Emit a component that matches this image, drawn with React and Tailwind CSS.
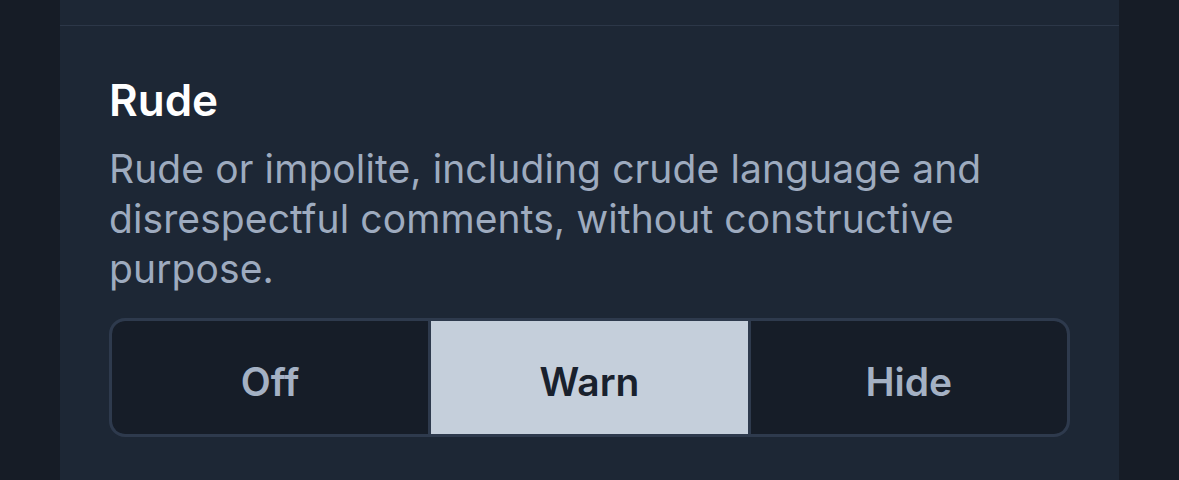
export default function App() {
  const font = { fontFamily: "Inter, 'Noto Sans', sans-serif" };
  return (
    <div className="w-[1179px] h-[480px] bg-[#161c26] flex justify-center overflow-hidden" style={font}>
      <div className="w-[1059px] h-full bg-[#1d2735] flex flex-col">
        <div className="h-[26px] border-b border-[#2c3748] shrink-0" />
        <div className="px-[49px] pt-[48px] flex flex-col">
          <div className="text-[44px] leading-[53px] font-semibold text-white">Rude</div>
          <div className="mt-[17px] text-[39px] leading-[50px] text-[#9eabbf] tracking-[0.1px]">
            Rude or impolite, including crude language and disrespectful comments, without constructive purpose.
          </div>
          <div className="mt-[24px] flex h-[119px] shrink-0 rounded-[16px] border-[3px] border-[#2e3a4d] bg-[#2e3a4d] gap-[3px] overflow-hidden">
            <div className="flex-1 flex items-center justify-center pt-[9px] bg-[#161d28] text-[#a4b1c4] text-[39px] font-semibold rounded-l-[13px]">Off</div>
            <div className="flex-1 flex items-center justify-center pt-[9px] bg-[#c5cfdb] text-[#19212d] text-[39px] font-semibold">Warn</div>
            <div className="flex-1 flex items-center justify-center pt-[9px] bg-[#161d28] text-[#a4b1c4] text-[39px] font-semibold rounded-r-[13px]">Hide</div>
          </div>
        </div>
      </div>
    </div>
  );
}
